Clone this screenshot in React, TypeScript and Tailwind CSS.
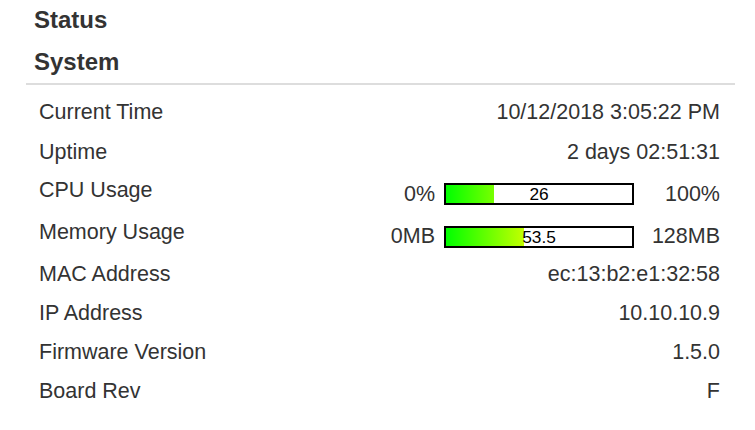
const rows: { label: string; value: string }[] = [
    { label: 'MAC Address', value: 'ec:13:b2:e1:32:58' },
    { label: 'IP Address', value: '10.10.10.9' },
    { label: 'Firmware Version', value: '1.5.0' },
    { label: 'Board Rev', value: 'F' },
];

function Meter({ min, max, value, pct }: { min: string; max: string; value: string; pct: number }) {
    return (
        <div className="flex items-center">
            <span className="w-[80px] text-right">{min}</span>
            <div className="relative ml-[9px] h-[22px] w-[190px] border-2 border-black bg-white">
                <div
                    className="absolute inset-y-0 left-0 bg-[linear-gradient(to_right,#00ff00,#ffff00_55%,#ff0000)] bg-[length:186px_100%]"
                    style={{ width: `${pct}%` }}
                />
                <div className="relative text-center text-[17.3px] leading-[18px] text-black">
                    {value}
                </div>
            </div>
            <span className="w-[86px] text-right">{max}</span>
        </div>
    );
}

export default function App() {
    return (
        <div className="min-h-screen w-[755px] bg-white font-['Liberation_Sans',Arial,sans-serif] text-[#333]">
            <div className="ml-[26px] w-[709px]">
                {/* Headings */}
                <h1 className="pl-[8px] pt-[6px] text-[24px] font-bold leading-[28px]">Status</h1>
                <h2 className="mt-[14px] pl-[8px] text-[24px] font-bold leading-[28px]">System</h2>
                <div className="mt-[7px] h-[2px] bg-[#dddddd]" />

                {/* Info table */}
                <div className="mt-[7px] pl-[13px] pr-[15px] text-[21.5px] leading-[25px]">
                    <div className="flex h-[40px] items-center justify-between">
                        <span>Current Time</span>
                        <span>10/12/2018 3:05:22 PM</span>
                    </div>
                    <div className="flex h-[40px] items-center justify-between">
                        <span>Uptime</span>
                        <span>2 days 02:51:31</span>
                    </div>
                    <div className="flex h-[39px] items-center justify-between">
                        <span className="mb-[3px]">CPU Usage</span>
                        <div className="mt-[5px]">
                            <Meter min="0%" max="100%" value="26" pct={26} />
                        </div>
                    </div>
                    <div className="flex h-[44px] items-center justify-between">
                        <span className="mb-[1px]">Memory Usage</span>
                        <div className="mt-[7px]">
                            <Meter min="0MB" max="128MB" value="53.5" pct={41.8} />
                        </div>
                    </div>
                    {rows.map((r) => (
                        <div key={r.label} className="flex h-[39px] items-center justify-between">
                            <span>{r.label}</span>
                            <span>{r.value}</span>
                        </div>
                    ))}
                </div>
            </div>
        </div>
    );
}
